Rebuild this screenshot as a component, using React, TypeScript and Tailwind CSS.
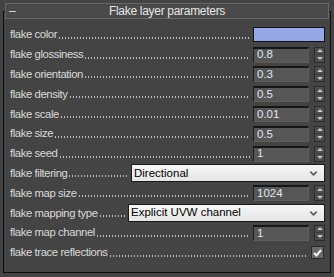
import React from "react";
import { ChevronDown } from "lucide-react";

type Row =
  | { label: string; kind: "color"; color: string }
  | { label: string; kind: "spin"; value: string }
  | { label: string; kind: "select"; value: string; width: string }
  | { label: string; kind: "check"; checked: boolean };

const rows: Row[] = [
  { label: "flake color", kind: "color", color: "#97a6e6" },
  { label: "flake glossiness", kind: "spin", value: "0.8" },
  { label: "flake orientation", kind: "spin", value: "0.3" },
  { label: "flake density", kind: "spin", value: "0.5" },
  { label: "flake scale", kind: "spin", value: "0.01" },
  { label: "flake size", kind: "spin", value: "0.5" },
  { label: "flake seed", kind: "spin", value: "1" },
  { label: "flake filtering", kind: "select", value: "Directional", width: "w-[194px]" },
  { label: "flake map size", kind: "spin", value: "1024" },
  { label: "flake mapping type", kind: "select", value: "Explicit UVW channel", width: "w-[197px]" },
  { label: "flake map channel", kind: "spin", value: "1" },
  { label: "flake trace reflections", kind: "check", checked: true },
];

const Dots = () => (
  <div className="flex-1 h-[2px] mt-[6px] ml-[2px] mr-[3px] bg-[repeating-linear-gradient(90deg,#b4bcc6_0_1px,transparent_1px_3px)]" />
);

const Spinner = ({ value }: { value: string }) => (
  <div className="flex items-center">
    <div className="w-[56px] h-[16px] bg-[#565656] border-t-2 border-l border-t-[#161616] border-l-[#1c1c1c] border-b border-r border-b-[#5e5e5e] border-r-[#5e5e5e] flex items-center pl-[3px] text-[11.5px] leading-none text-[#e2e6f0]">
      {value}
    </div>
    <div className="ml-[5px] w-[11px] h-[16px] bg-[#4d4d4d] border border-[#2c2c2c] flex flex-col items-center justify-center gap-[2px]">
      <div className="w-0 h-0 border-l-[3px] border-r-[3px] border-b-[3px] border-l-transparent border-r-transparent border-b-[#c8c8c8]" />
      <div className="w-[7px] h-px bg-[#3a3a3a]" />
      <div className="w-0 h-0 border-l-[3px] border-r-[3px] border-t-[3px] border-l-transparent border-r-transparent border-t-[#c8c8c8]" />
    </div>
  </div>
);

const Control = ({ row }: { row: Row }) => {
  if (row.kind === "color") {
    return (
      <div
        className="w-[72px] h-[15px] border border-[#111]"
        style={{ backgroundColor: row.color }}
      />
    );
  }
  if (row.kind === "spin") return <Spinner value={row.value} />;
  if (row.kind === "select") {
    return (
      <div
        className={`${row.width} h-[18px] bg-[linear-gradient(#f6f6f6,#e6e6e6)] border border-[#1a1a1a] flex items-center justify-between pl-[2px] pr-[5px] text-[11.5px] text-black`}
      >
        <span>{row.value}</span>
        <ChevronDown size={11} strokeWidth={3.5} color="#5a5a5a" />
      </div>
    );
  }
  return (
    <div className="mr-px w-[13px] h-[13px] bg-[#6a6a6a] border border-[#2a2a2a] flex items-center justify-center">
      <svg width="9" height="8" viewBox="0 0 9 8">
        <path d="M1 4 L3.5 6.5 L8 1" stroke="#f4f4f4" strokeWidth="2" fill="none" />
      </svg>
    </div>
  );
};

export default function App() {
  return (
    <div className="w-[334px] h-[277px] bg-[#444444] pt-[11px] font-['Liberation_Sans',Arial,sans-serif]">
      <div className="ml-[3px] w-[328px] h-[262px] border border-[#0e0e0e] flex flex-col">
        <div className="-mt-[9px] mx-[1px] h-[16px] bg-[#4a4a4a] border border-[#676767] relative flex items-center justify-center text-[12px] tracking-[-0.3px] text-[#e6e6e6]">
          <span className="absolute left-[3px] top-0 text-[12px] leading-[14px]">–</span>
          <span>Flake layer parameters</span>
        </div>
        <div className="pt-[6px] pl-[6px] pr-[5px] flex flex-col">
          {rows.map((row) => (
            <div key={row.label} className="h-[19.8px] flex items-center text-[11.3px] text-[#dadada]">
              <span className="whitespace-nowrap tracking-[-0.4px]">{row.label}</span>
              <Dots />
              <Control row={row} />
            </div>
          ))}
        </div>
      </div>
    </div>
  );
}
